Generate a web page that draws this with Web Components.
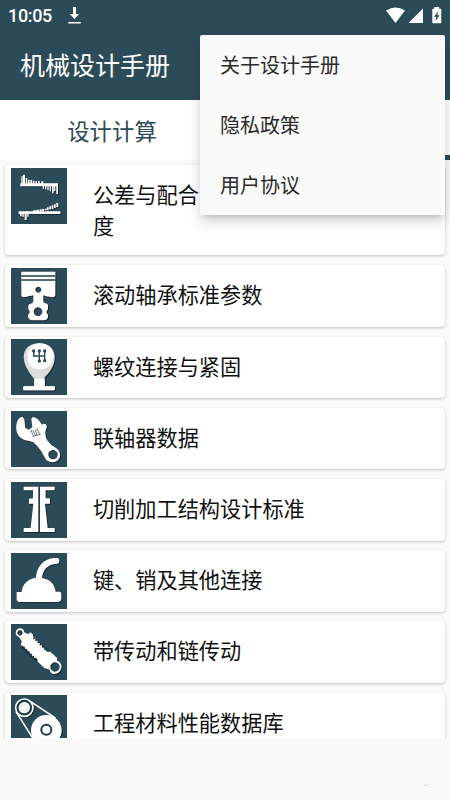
<!DOCTYPE html>
<html lang="zh-CN">
<head>
<meta charset="utf-8">
<meta name="viewport" content="width=device-width">
<title>机械设计手册</title>
<style>
html,body{margin:0;width:450px;height:800px;overflow:hidden;background:#fafafa}
body{font-family:Roboto,"Noto Sans CJK SC",sans-serif}
</style>
</head>
<body>
<handbook-app></handbook-app>
<script>
const define = (name, html) => {
  const t = document.createElement('template');
  t.innerHTML = html;
  customElements.define(name, class extends HTMLElement {
    constructor() {
      super();
      this.attachShadow({mode: 'open'}).append(t.content.cloneNode(true));
    }
  });
};

define('status-bar', `
<style>
:host{display:flex;align-items:center;height:31px;padding:0 8px;background:#2c4b58;color:#fff;box-sizing:border-box}
span{font:500 18px/32px Roboto,sans-serif;width:60px;letter-spacing:-.35px}
.sp{flex:1}
svg{display:block}
</style>
<span>10:05</span>
<svg width="13" height="17" viewBox="0 0 13 17" fill="#fff"><path d="M5 0h3v7h3.200L6.500 12 1.800 7H5zM.3 15h12.500v1.600H.3z"/></svg>
<div class="sp"></div>
<svg width="56" height="18" viewBox="0 0 56 18" fill="#fff"><path d="M0 3.500Q9.500-2.500 19 3.500L9.500 16z"/><path d="M37 1.500V16H22.500z"/><path fill-rule="evenodd" d="M48.200 0h5v1.800h1.300q.8 0 .8.800V15.400q0 .8-.8.800h-7.400q-.8 0-.8-.8V2.600q0-.8.800-.8h1.100zM52 4.300l-4 5.500h2.200L49.500 14l4.200-5.800h-2.300z"/></svg>`);

define('app-header', `
<style>
:host{display:flex;align-items:center;height:69px;padding:2px 20px 0;background:#2c4b58;color:#fff;box-sizing:border-box;font-size:25px;line-height:40px}
slot{display:block}
</style><slot></slot>`);

define('tab-bar', `
<style>
:host{display:grid;grid-template-columns:1fr 1fr;height:60px;background:#fff;color:#2c4b58;font-size:22.400px}
div{display:flex;align-items:center;justify-content:center;box-sizing:border-box;padding-right:1px}
.on{border-bottom:5px solid #2c4b58}
</style><div><slot></slot></div><div class="on"></div>`);

define('handbook-card', `
<style>
:host{display:flex;gap:25.500px;box-sizing:border-box;min-height:61.600px;padding:2.800px 7px;border-radius:4px;background:#fff;box-shadow:0 1px 3px rgba(0,0,0,.23);color:#111;font-size:21.200px;line-height:31.500px}
.label{display:flex;align-items:center}
:host([tall]){height:90px}
:host([tall]) .label{padding-top:2px}
</style>
<slot name="icon"></slot><div class="label"><div><slot></slot></div></div>`);

const ICONS = {
tolerance: `<path d="M28 46H141V55H28zM23 130H148V138H23zM31 25h4v22h-4zM36 20h6v27h-6zM44 30h5v17h-5zM51 35h5v12h-5zM58 36h5v11h-5zM65 38h5v9h-5zM73 40h5v7h-5zM81 39h5v8h-5zM91 40h6v7h-6zM95 54h4v8h-4zM102 54h4v10h-4zM109 54h4v13h-4zM116 54h4v16h-4zM123 54h5v22h-5zM129 54h4v15h-4zM136 54h5v24h-5zM27 138h5v7h-5zM34 138h4v9h-4zM41 138h6v18h-6zM49 138h4v8h-4zM67 127h9v4h-9zM77 125h7v6h-7zM86 124h6v7h-6zM93 123h6v6h-6zM101 122h6v5h-6zM108 118h5v9h-5zM115 115h5v9h-5zM122 112h5v11h-5zM129 109h5v11h-5zM136 105h6v12h-6z"/>`,
piston: `<path fill-rule="evenodd" d="M31 11H133V82Q132 88 125 88Q105 86 97 82V100Q99 107 108 107L111 111V123L107 130V135L111 140V148Q108 157 99 157H63Q52 154 51 146V140L56 135V129L52 124V112Q54 107 64 106L67 100V82Q58 84 38 88Q32 88 31 82zM82 56a9 9 0 1 0 .1 0zM81 118a13 13 0 1 0 .1 0z"/><path d="M31 24H133M31 36H133" stroke="#203c47" stroke-width="4"/>`,
gear: `<path fill="#ddd" d="M84 13Q126 14 131 50Q134 76 111 104L101 115V142H129Q132 142 132 145V151Q132 154 129 154H40Q36 154 36 151V145Q36 142 40 142H69V119Q38 84 38 52Q42 14 84 13z"/><path fill="#fff" d="M85 13Q124 14 127 48C128 79 109 91 87 91C63 91 48 77 50 48Q51 16 85 13zM72 119H101V142H129L132 146V151L129 154H40L36 151V146L40 142H70z"/><path d="M68 37V51H101V36M85 36V66M101 36V64" fill="none" stroke="#2c4b58" stroke-width="4"/><g fill="#2c4b58"><circle cx="68" cy="36" r="5"/><circle cx="85" cy="36" r="5"/><circle cx="101" cy="36" r="5"/><circle cx="85" cy="66" r="5"/><circle cx="101" cy="65" r="5"/></g>`,
wrench: `<path fill-rule="evenodd" d="M34 17C20 19 14 38 16 57Q19 78 40 87Q55 89 67 94Q79 104 91 121L102 141Q108 153 125 154Q142 152 147 137Q149 121 136 112Q118 102 108 87Q101 74 104 58L108 49L105 40L98 38L94 41L91 38Q85 26 75 21L65 18L61 23L64 49L53 56L43 51L40 25zM126 117a14 14 0 1 0 .1 0z"/><path d="M60 59L68 76M66 58L74 75M72 57L79 73M79 55L87 72M59 61L64 59M65 76L89 70M74 57L80 55" stroke="#52636a" stroke-width="2.500"/>`,
flange: `<path d="M38 14H82V150H38V138H59L67 65H54V50L66 49V25H38zM87 14H131V25H104V49H117V65H102L110 138H131V150H87z"/>`,
lever: `<path d="M17 117H32C33 93 53 77 75 74C76 43 96 19 127 15H139Q145 16 145 21V26Q145 30 139 32C108 34 96 50 93 75C119 80 131 94 134 116H147Q151 118 151 123V138Q150 146 143 147H24Q17 145 17 139z"/>`,
shock: `<path fill-rule="evenodd" d="M26 13Q39 13 40 25L50 30L55 28L59 25L66 32L67 39L73 42L73 47L79 49L80 55L86 57L87 62L93 64L94 70L100 72L101 78L107 79L108 83H118L139 103L137 109Q154 116 151 133Q146 150 129 150Q118 149 116 137L107 134L101 133L80 113V108L76 103L70 102L69 97L63 95L62 90L56 88L55 82L49 81L48 75L42 74L41 68L35 67L30 64V57L33 53L24 39Q14 35 14 27Q15 15 26 13zM27 19a8 8 0 1 0 .1 0zM132 115a14 14 0 1 0 .1 0z"/><path d="M68 41L109 80M31 67L76 108" stroke="#203c47" stroke-width="7" stroke-dasharray="4 5"/>`,
belt: `<circle cx="40" cy="38" r="26" fill="none" stroke="#fff" stroke-width="5"/><circle cx="40" cy="38" r="17"/><circle cx="40" cy="38" r="10" fill="none" stroke="#c3ccd0" stroke-width="2"/><path d="M59 20L133 69M15 50L72 140" stroke="#fff" stroke-width="5"/><circle cx="106" cy="106" r="46"/><circle cx="106" cy="104" r="15" fill="none" stroke="#203c47" stroke-width="6"/>`
};
customElements.define('part-icon', class extends HTMLElement {
  connectedCallback() {
    this.attachShadow({mode: 'open'}).innerHTML = `<style>:host{display:block;width:56px;height:56px;flex:none;background:#2c4b58;margin-left:-.600px}svg{display:block;filter:drop-shadow(1px 1px .5px rgba(10,25,32,.65))}</style>
    <svg width="56" height="56" viewBox="0 0 168 168" fill="#fff">${ICONS[this.getAttribute('kind')]}</svg>`;
  }
});

define('card-list', `
<style>
:host{display:flex;flex-direction:column;gap:9.600px;height:578px;box-sizing:border-box;padding:5.300px 5px 0;overflow:hidden}
::slotted(*){flex:none}
::slotted(:first-child){margin-bottom:.5px}
</style><slot></slot>`);

define('overflow-menu', `
<style>
:host{position:absolute;left:200px;top:35px;width:245px;height:180px;border-radius:2px;background:#fafafa;box-shadow:0 5px 5px -3px rgba(0,0,0,.1),0 6px 14px rgba(0,0,0,.18);color:#2b2b2b;font-size:20px;display:grid;grid-template-rows:repeat(3,60px)}
::slotted(*){display:flex;align-items:center;padding:0 0 2px 20px}
</style><slot></slot>`);

define('handbook-app', `
<style>
:host{display:block;position:relative;width:450px;height:800px;background:#fafafa;overflow:hidden}
i{position:absolute;left:425px;top:785px;width:1px;height:1px;background:#4ca6b0}
</style>
<status-bar></status-bar>
<app-header>机械设计手册</app-header>
<tab-bar>设计计算</tab-bar>
<card-list>
<handbook-card tall><part-icon slot="icon" kind="tolerance"></part-icon>公差与配合<br>度</handbook-card>
<handbook-card><part-icon slot="icon" kind="piston"></part-icon>滚动轴承标准参数</handbook-card>
<handbook-card><part-icon slot="icon" kind="gear"></part-icon>螺纹连接与紧固</handbook-card>
<handbook-card><part-icon slot="icon" kind="wrench"></part-icon>联轴器数据</handbook-card>
<handbook-card><part-icon slot="icon" kind="flange"></part-icon>切削加工结构设计标准</handbook-card>
<handbook-card><part-icon slot="icon" kind="lever"></part-icon>键、销及其他连接</handbook-card>
<handbook-card><part-icon slot="icon" kind="shock"></part-icon>带传动和链传动</handbook-card>
<handbook-card><part-icon slot="icon" kind="belt"></part-icon>工程材料性能数据库</handbook-card>
</card-list>
<overflow-menu><div>关于设计手册</div><div>隐私政策</div><div>用户协议</div></overflow-menu>
<i></i>`);
</script>
</body>
</html>
